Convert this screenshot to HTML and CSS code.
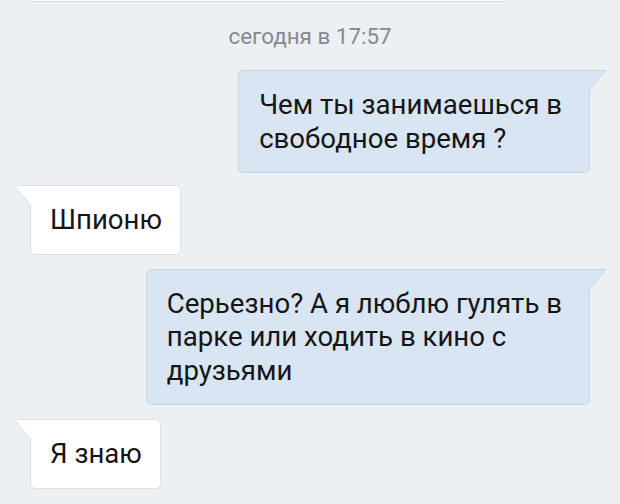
FILE: index.html
```html
<!DOCTYPE html>
<html lang="ru">
<head>
<meta charset="utf-8">
<title>Чат</title>
<link rel="stylesheet" href="styles.css">
</head>
<body>
<div class="chat">
  <div class="prev"></div>
  <div class="time">сегодня в 17:57</div>
  <div class="msg out first">Чем ты занимаешься в<br>свободное время ?<svg class="tail" width="18" height="22" viewBox="0 0 18 22"><polygon points="0,0 17,0 0,20" /><polyline points="0,0.5 17,0.5 0.5,20.5" /></svg></div>
  <div class="msg in second">Шпионю<svg class="tail" width="18" height="22" viewBox="0 0 18 22"><polygon points="18,0 1,0 18,20" /><polyline points="18,0.5 1,0.5 17.5,20.5" /></svg></div>
  <div class="msg out">Серьезно? А я люблю гулять в<br>парке или ходить в кино с<br>друзьями<svg class="tail" width="18" height="22" viewBox="0 0 18 22"><polygon points="0,0 17,0 0,20" /><polyline points="0,0.5 17,0.5 0.5,20.5" /></svg></div>
  <div class="msg in">Я знаю<svg class="tail" width="18" height="22" viewBox="0 0 18 22"><polygon points="18,0 1,0 18,20" /><polyline points="18,0.5 1,0.5 17.5,20.5" /></svg></div>
</div>
</body>
</html>
```
FILE: styles.css
```css
html, body {
  margin: 0;
  padding: 0;
}
body {
  background: #ecf0f3;
  font-family: Roboto, "Noto Sans", "Liberation Sans", sans-serif;
  width: 620px;
  height: 504px;
  overflow: hidden;
}
.chat {
  display: flex;
  flex-direction: column;
}
.prev {
  align-self: flex-start;
  margin-left: 32px;
  width: 472px;
  height: 1px;
  background: #ffffff;
  border-bottom: 1px solid #d9dee3;
  border-radius: 0 0 4px 4px;
}
.time {
  align-self: center;
  margin-top: 22px;
  font-size: 22.4px;
  line-height: 24px;
  color: #858a91;
}
.msg {
  position: relative;
  box-sizing: border-box;
  margin-top: 14px;
  padding: 17px 18px 17px 19px;
  font-size: 27.6px;
  line-height: 33.5px;
  color: #151515;
  border-radius: 5px;
  white-space: nowrap;
}
.msg.first {
  margin-top: 22px;
}
.msg.second {
  margin-top: 12px;
}
.out {
  align-self: flex-end;
  margin-right: 30px;
  padding-left: 20px;
  padding-right: 27px;
  background: #d9e5f3;
  border: 1px solid #c8d5e4;
  border-top-right-radius: 0;
}
.in {
  align-self: flex-start;
  margin-left: 30px;
  background: #ffffff;
  border: 1px solid #dde1e6;
  border-top-left-radius: 0;
}
.tail {
  position: absolute;
  top: -1px;
  display: block;
}
.out .tail {
  left: 100%;
}
.in .tail {
  right: 100%;
}
.out .tail polygon {
  fill: #d9e5f3;
}
.out .tail polyline {
  fill: none;
  stroke: #c8d5e4;
  stroke-width: 1;
}
.in .tail polygon {
  fill: #ffffff;
}
.in .tail polyline {
  fill: none;
  stroke: #dde1e6;
  stroke-width: 1;
}
```
